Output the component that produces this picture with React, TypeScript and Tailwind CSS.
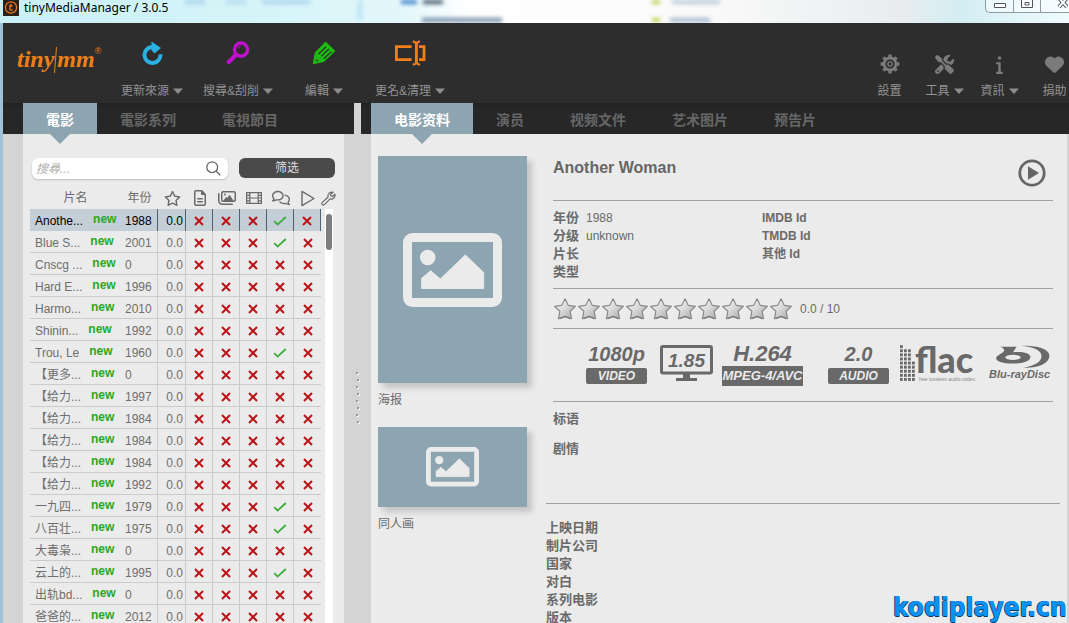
import type { ReactNode } from "react";
import { FaHeart, FaInfo, FaScrewdriverWrench, FaRegComments, FaRegFileLines, FaRegImages, FaRegStar } from "react-icons/fa6";

function RefreshIcon() {
  return (
    <svg width="21" height="24" viewBox="0 0 21 24" aria-hidden="true">
      <path d="M18.4 13.2A8 8 0 1 1 10.2 6" fill="none" stroke="#2bb0e4" strokeWidth="4" />
      <path d="M9.5.6 19 7 12.6 12.4 9.6 9.6Z" fill="#2bb0e4" />
    </svg>
  );
}

function ScrapeIcon() {
  return (
    <svg width="24" height="24" viewBox="0 0 24 24" aria-hidden="true">
      <circle cx="15" cy="8.6" r="6.6" fill="none" stroke="#bf12cc" strokeWidth="3.4" />
      <path d="M12 7.5A3.4 3.4 0 0 1 15 5" fill="none" stroke="#bf12cc" strokeWidth="1.2" />
      <path d="m9.8 14-7 7" stroke="#bf12cc" strokeWidth="4.2" strokeLinecap="round" />
    </svg>
  );
}

function EditIcon() {
  return (
    <svg width="24" height="24" viewBox="0 0 24 24" aria-hidden="true">
      <path d="M13.6 1.4 22.4 10 11.6 20.2 1.6 22.4 3.4 12Z" fill="#1dbb12" stroke="#1dbb12" strokeWidth="1.4" strokeLinejoin="round" />
      <path d="m6.6 13 7.6-7.4M9.2 15.4l7.8-7.4M11.8 17.8l7.6-7.2" stroke="#2d2d2d" strokeWidth="1.2" />
      <path d="m4 18.6 2 1.8" stroke="#2d2d2d" strokeWidth="1.2" />
    </svg>
  );
}

function RenameIcon() {
  return (
    <svg width="32" height="26" viewBox="0 0 32 26" aria-hidden="true" fill="none" stroke="#ef7f1a" strokeWidth="2.8">
      <path d="M17.6 6.6H2.4v13h15.2" />
      <path d="M25 6.6h5v13h-5" />
      <path d="M22.4 3.4v19.2" />
      <path d="M18.8 1.2q3.6.8 3.6 3.4 0-2.6 3.6-3.4M18.8 24.8q3.6-.8 3.6-3.4 0 2.6 3.6 3.4" strokeWidth="2.2" />
    </svg>
  );
}

function GearIcon() {
  return (
    <svg width="20" height="20" viewBox="0 0 20 20" aria-hidden="true" fill="none" stroke="#7b7b7b">
      <circle cx="10" cy="10" r="6" strokeWidth="2.8" />
      <path d="M10 .6v3M10 16.4v3M.6 10h3M16.4 10h3M3.4 3.4l2 2M14.6 14.6l2 2M3.4 16.6l2-2M14.6 5.4l2-2" strokeWidth="3.4" />
      <circle cx="10" cy="10" r="2.1" strokeWidth="1.4" />
    </svg>
  );
}

function Caret() {
  return (
    <svg width="10" height="6" viewBox="0 0 10 6" aria-hidden="true" className="shrink-0">
      <path d="M0 .5h10L5 6Z" fill="#8d8d8d" />
    </svg>
  );
}

function Cross() {
  return (
    <svg width="10" height="10" viewBox="0 0 10 10" role="img" aria-label="no" className="mx-auto block">
      <path d="m1 1 8 8M9 1 1 9" stroke="#bb1418" strokeWidth="2" />
    </svg>
  );
}

function Check() {
  return (
    <svg width="14" height="10" viewBox="0 0 14 10" role="img" aria-label="yes" className="mx-auto block">
      <path d="m1.2 5.2 3.4 3.4L12.8 1" fill="none" stroke="#3aad3a" strokeWidth="1.8" />
    </svg>
  );
}

function FilmIcon() {
  return (
    <svg width="16" height="14" viewBox="0 0 16 14" aria-hidden="true" fill="none" stroke="#6a6a6a" strokeWidth="1.2">
      <path d="M.6 1.6h14.8v10.8H.6zM3.8 1.6v10.8M12.2 1.6v10.8M3.8 7h8.4M.6 4.4h3.2M.6 7h3.2M.6 9.8h3.2M12.2 4.4h3.2M12.2 7h3.2M12.2 9.8h3.2" />
    </svg>
  );
}

function PlayOutline() {
  return (
    <svg width="14" height="17" viewBox="0 0 14 17" aria-hidden="true">
      <path d="M1 1.4v14.2l12-7.1Z" fill="none" stroke="#6a6a6a" strokeWidth="1.4" strokeLinejoin="round" />
    </svg>
  );
}

function WrenchIcon() {
  return (
    <svg width="15" height="15" viewBox="0 0 15 15" aria-hidden="true">
      <path
        d="M12.2 1.3A3.9 3.9 0 0 0 7.1 6L1.3 11.4a1.5 1.5 0 0 0 2.2 2.2L9 7.9a3.9 3.9 0 0 0 4.9-4.7L11.7 5.3l-1.9-.4-.3-1.7Z"
        fill="none"
        stroke="#6a6a6a"
        strokeWidth="1.2"
        strokeLinejoin="round"
      />
    </svg>
  );
}

function PictureIcon({ className }: { className: string }) {
  return (
    <svg viewBox="0 0 99 74" aria-hidden="true" className={className}>
      <rect x="4.5" y="4.5" width="90" height="65" rx="5" fill="none" stroke="#ebebeb" strokeWidth="9" />
      <circle cx="24.7" cy="24.5" r="7.8" fill="#ebebeb" />
      <path d="M18.7 55.4V45.3L27.7 37.7 37.3 46 62.3 22 80.7 39.5V55.4Z" fill="#ebebeb" stroke="#ebebeb" strokeLinejoin="round" />
    </svg>
  );
}

function RatingStar() {
  return (
    <svg width="24" height="24" viewBox="0 0 24 24" aria-hidden="true">
      <path
        d="m12 1.8 3.2 6.5 7.2 1-5.2 5 1.3 7.4-6.5-2.4-6.5 2.4 1.3-7.4-5.2-5 7.2-1Z"
        fill="url(#starFill)"
        stroke="#8b8b8b"
        strokeWidth="1.2"
        strokeLinejoin="round"
      />
      <path d="m6.5 21.7 5.5-2 5.5 2" fill="none" stroke="#777" strokeWidth="1.2" />
    </svg>
  );
}

function ToolButton({ label, icon, menu, side }: { label: string; icon: ReactNode; menu?: boolean; side?: boolean }) {
  return (
    <button type="button" className={side ? "flex w-[55px] flex-col items-center justify-end gap-[9px] pb-1 text-[#7b7b7b]" : "flex w-[86px] flex-col items-center justify-end gap-4 pb-1"}>
      <span className={side ? "flex h-5 items-center" : "flex h-7 items-center"}>{icon}</span>
      <span className="flex h-4 items-center gap-1 whitespace-nowrap text-xs leading-4 text-[#929292]">
        {label}
        {menu && <Caret />}
      </span>
    </button>
  );
}

function Tabs({ items, name }: { items: string[]; name: string }) {
  return (
    <div role="tablist" aria-label={name} className="flex h-[31px]">
      {items.map((item, i) => (
        <button
          key={item}
          type="button"
          role="tab"
          aria-selected={i === 0}
          className={
            i === 0
              ? "relative bg-[#8da4b1] px-[23px] pt-[2px] text-sm font-bold whitespace-nowrap text-white"
              : "px-[23px] pt-[2px] text-sm font-bold whitespace-nowrap text-[#666]"
          }
        >
          {item}
          {i === 0 && (
            <svg width="20" height="10" viewBox="0 0 20 10" aria-hidden="true" className="absolute top-full left-1/2 z-10 -translate-x-1/2">
              <path d="M0 0h20L10 10Z" fill="#8da4b1" />
            </svg>
          )}
        </button>
      ))}
    </div>
  );
}

type Movie = { title: string; year: string; subs?: boolean };

const movies: Movie[] = [
  { title: "Anothe...", year: "1988", subs: true },
  { title: "Blue S...", year: "2001", subs: true },
  { title: "Cnscg ...", year: "0" },
  { title: "Hard E...", year: "1996" },
  { title: "Harmo...", year: "2010" },
  { title: "Shinin...", year: "1992" },
  { title: "Trou, Le", year: "1960", subs: true },
  { title: "【更多...", year: "0" },
  { title: "【给力...", year: "1997" },
  { title: "【给力...", year: "1984" },
  { title: "【给力...", year: "1984" },
  { title: "【给力...", year: "1984" },
  { title: "【给力...", year: "1992" },
  { title: "一九四...", year: "1979", subs: true },
  { title: "八百壮...", year: "1975", subs: true },
  { title: "大毒枭...", year: "0" },
  { title: "云上的...", year: "1995", subs: true },
  { title: "出轨bd...", year: "0" },
  { title: "爸爸的...", year: "2012" },
];

function MovieTable() {
  return (
    <table className="w-[291px] table-fixed border-separate border-spacing-0 text-xs">
      <colgroup>
        <col className="w-[91px]" />
        <col className="w-[37px]" />
        <col className="w-7" />
        <col className="w-[27px]" />
        <col className="w-[27px]" />
        <col className="w-[27px]" />
        <col className="w-[27px]" />
        <col className="w-[27px]" />
      </colgroup>
      <thead>
        <tr className="h-[22px] text-[#6a6a6a] [&>th]:p-0 [&>th]:font-normal [&_svg]:mx-auto [&_svg]:block">
          <th scope="col">片名</th>
          <th scope="col">年份</th>
          <th scope="col" aria-label="rating"><FaRegStar size={17} /></th>
          <th scope="col" aria-label="nfo"><FaRegFileLines size={16} /></th>
          <th scope="col" aria-label="images"><FaRegImages size={18} /></th>
          <th scope="col" aria-label="trailer"><FilmIcon /></th>
          <th scope="col" aria-label="subtitles"><FaRegComments size={18} /></th>
          <th scope="col" aria-label="watched"><PlayOutline /></th>
        </tr>
      </thead>
      <tbody>
        {movies.map((m, i) => (
          <tr
            key={i}
            className={
              i === 0
                ? "h-[22px] bg-[#c3ced6] text-black [&>td]:border-[#4c6375] [&>td]:p-0 [&>td]:pt-px"
                : "h-[22px] text-[#6e6e6e] [&>td]:border-b [&>td]:border-[#c9cbcc] [&>td]:p-0 [&>td]:pt-[2px]"
            }
          >
            <td>
              <div className="flex items-center gap-[10px] pl-[5px] leading-4 whitespace-nowrap">
                {m.title}
                <b className="pb-[3px] text-[#2aa81c]">new</b>
              </div>
            </td>
            <td className="border-r">
              <div className="pl-1 leading-4">{m.year}</div>
            </td>
            <td className="border-r">
              <div className="pr-[2px] text-right leading-4">0.0</div>
            </td>
            <td className="border-r"><Cross /></td>
            <td className="border-r"><Cross /></td>
            <td className="border-r"><Cross /></td>
            <td className="border-r">{m.subs ? <Check /> : <Cross />}</td>
            <td className={i === 0 ? "border-r" : ""}><Cross /></td>
          </tr>
        ))}
      </tbody>
    </table>
  );
}

function MovieList() {
  return (
    <section className="flex min-h-0 flex-1 flex-col bg-[#ebebeb] pt-6 pl-[7px]">
      <div className="flex items-start gap-[11px] pr-[9px] pl-[2px]">
        <label className="flex h-[21px] flex-1 items-center rounded-md bg-white pr-[7px] pl-1 shadow-[0_1px_2px_rgba(0,0,0,0.2)]">
          <input type="search" aria-label="搜尋" placeholder="搜尋..." className="h-full min-w-0 flex-1 bg-transparent text-xs outline-none placeholder:text-[#b0b0b0] placeholder:italic" />
          <svg width="15" height="15" viewBox="0 0 15 15" aria-hidden="true" fill="none" stroke="#666" strokeWidth="1.3">
            <circle cx="6.2" cy="6.2" r="5.4" />
            <path d="m10 10 4.4 4.4" />
          </svg>
        </label>
        <button type="button" className="h-5 w-24 rounded-md bg-[#4a4a4a] text-xs leading-5 text-[#dedede]">筛选</button>
      </div>
      <div className="mt-2 flex min-h-0 flex-1 overflow-hidden">
        <div className="shrink-0">
          <MovieTable />
        </div>
        <div className="flex w-[15px] flex-col">
          <button type="button" aria-label="columns" className="flex h-[22px] items-center justify-center">
            <WrenchIcon />
          </button>
          <div className="mr-[3px] ml-1 flex-1 bg-white px-px pt-[5px]">
            <div className="h-9 rounded-full bg-[#7d7d7d]" />
          </div>
        </div>
      </div>
    </section>
  );
}

function AudioVideoBadge({ value, kind }: { value: string; kind: string }) {
  return (
    <div className="flex w-[61px] flex-col items-center">
      <span className="text-xl leading-[22px] font-bold italic">{value}</span>
      <span className="mt-[3px] h-4 w-full rounded-xs bg-[#696969] text-center text-xs leading-4 font-bold text-[#ebebeb] italic">{kind}</span>
    </div>
  );
}

const flacColumns = [9, 8, 8, 5];

function FlacLogo() {
  return (
    <svg width="78" height="44" viewBox="0 0 78 44" role="img" aria-label="flac">
      {flacColumns.map((count, c) =>
        Array.from({ length: count }, (_, r) => (
          <rect key={`${c}-${r}`} x={c * 4} y={36 - r * 4.1} width="2.8" height="2.9" fill="#696969" />
        )),
      )}
      <text x="15" y="31" fontFamily="Lato, sans-serif" fontWeight="900" fontSize="36" fill="#696969">flac</text>
      <text x="19" y="39" fontFamily="Liberation Sans, sans-serif" fontSize="5" fill="#858585">free lossless audio codec</text>
    </svg>
  );
}

function BluRayLogo() {
  return (
    <svg width="66" height="38" viewBox="0 0 66 38" role="img" aria-label="Blu-ray Disc" fill="#696969">
      <path d="M11.500 1.800H27.600L24 7.200C34 6.200 41.800 8.400 41.400 12.200 41 16.400 33 18.600 23.600 18.600 14.500 18.600 6.600 16.600 7.200 12.800 7.600 10.800 11.500 9.500 14.500 6.800 16 5.200 14.800 3.200 11.500 1.800Z" />
      <ellipse cx="24" cy="12.400" rx="7.600" ry="2.600" fill="#ebebeb" />
      <path d="M32 .8C48 .2 60.800 3.800 60.400 11.200 60 19 47 23.600 34 22.600 45 21 52.500 17 52.500 11.200 52.500 5 44 2 32 .8Z" />
      <text x="0" y="33" fontFamily="Liberation Sans, sans-serif" fontWeight="700" fontStyle="italic" fontSize="11">Blu-rayDisc</text>
    </svg>
  );
}

function MediaLogos() {
  return (
    <div className="flex h-[72px] items-center pb-[3px] pl-[33px] text-[#696969] [&>*]:shrink-0">
      <AudioVideoBadge value="1080p" kind="VIDEO" />
      <svg width="53" height="37" viewBox="0 0 53 37" className="ml-[13px]" role="img" aria-label="1.85">
        <rect x="1.5" y="1.5" width="50" height="26.5" rx="1.5" fill="none" stroke="#696969" strokeWidth="3" />
        <path d="M23 29h7v4h7v3H16v-3h7Z" fill="#696969" />
        <text x="26.5" y="21.5" textAnchor="middle" fontFamily="Liberation Sans, sans-serif" fontWeight="700" fontStyle="italic" fontSize="19" fill="#696969">1.85</text>
      </svg>
      <div className="ml-[9px] flex w-[81px] flex-col items-center">
        <span className="text-[22px] leading-6 font-bold italic">H.264</span>
        <span className="h-5 w-full bg-[#696969] text-center text-[13px] leading-5 font-bold whitespace-nowrap text-[#ebebeb] italic">MPEG-4/AVC</span>
      </div>
      <div className="ml-[25px]">
        <AudioVideoBadge value="2.0" kind="AUDIO" />
      </div>
      <div className="ml-[11px]">
        <FlacLogo />
      </div>
      <div className="ml-[11px]">
        <BluRayLogo />
      </div>
    </div>
  );
}

function Artwork() {
  return (
    <div className="flex w-[149px] shrink-0 flex-col pt-[22px] text-xs text-[#6a6a6a]">
      <figure>
        <div className="flex h-[227px] items-center justify-center bg-[#8da4b1] shadow-[5px_5px_6px_rgba(0,0,0,0.17)]">
          <PictureIcon className="w-[99px]" />
        </div>
        <figcaption className="mt-[9px] h-[35px] leading-4">海报</figcaption>
      </figure>
      <figure>
        <div className="flex h-20 items-center justify-center bg-[#8da4b1] shadow-[5px_5px_6px_rgba(0,0,0,0.17)]">
          <PictureIcon className="w-[53px]" />
        </div>
        <figcaption className="mt-[9px] leading-4">同人画</figcaption>
      </figure>
    </div>
  );
}

const details = ["上映日期", "制片公司", "国家", "对白", "系列电影", "版本"];

function MovieDetails() {
  return (
    <article className="min-w-0 flex-1 text-xs text-[#6a6a6a]">
      <div className="px-[7px]">
        <div className="flex h-[67px] items-start justify-between border-b border-[#a2a2a2] pt-6 pr-[7px]">
          <h1 className="text-base leading-5 font-bold text-[#666]">Another Woman</h1>
          <button type="button" aria-label="play" className="pt-px">
            <svg width="28" height="28" viewBox="0 0 28 28" aria-hidden="true">
              <circle cx="14" cy="14" r="12.2" fill="none" stroke="#666" strokeWidth="2.8" />
              <path d="M10 7.2v13.6L21 14Z" fill="#666" />
            </svg>
          </button>
        </div>
        <div className="grid h-22 grid-cols-[209px_1fr] border-b border-[#a2a2a2] pt-2 leading-[18px]">
          <dl className="grid grid-cols-[33px_1fr] content-start [&>dt]:text-[13px] [&>dt]:font-bold">
            <dt>年份</dt>
            <dd>1988</dd>
            <dt>分级</dt>
            <dd>unknown</dd>
            <dt>片长</dt>
            <dd />
            <dt>类型</dt>
            <dd />
          </dl>
          <dl className="font-bold">
            <dt>IMDB Id</dt>
            <dt>TMDB Id</dt>
            <dt>其他 Id</dt>
          </dl>
        </div>
        <div className="flex h-10 items-center border-b border-[#a2a2a2]">
          <svg width="0" height="0" aria-hidden="true">
            <defs>
              <linearGradient id="starFill" x1="0" y1="0" x2="1" y2="1">
                <stop offset="0.2" stopColor="#f4f4f4" />
                <stop offset="0.9" stopColor="#adadad" />
              </linearGradient>
            </defs>
          </svg>
          {Array.from({ length: 10 }, (_, i) => (
            <RatingStar key={i} />
          ))}
          <span className="pl-[7px]">0.0 / 10</span>
        </div>
        <div className="border-b border-[#a2a2a2]">
          <MediaLogos />
        </div>
        <h2 className="mt-2 h-[30px] text-[13px] leading-[18px] font-bold">标语</h2>
        <h2 className="text-[13px] leading-[18px] font-bold">剧情</h2>
      </div>
      <dl className="mt-[45px] border-t border-[#a2a2a2] pt-[15px] text-[13px] leading-[18px] font-bold">
        {details.map((d) => (
          <dt key={d}>{d}</dt>
        ))}
      </dl>
    </article>
  );
}

function TitleBar() {
  return (
    <header className="relative flex h-[23px] shrink-0 items-start justify-between overflow-hidden bg-[linear-gradient(90deg,#c9f0f6_0%,#d8f5f9_28%,#e4f7fb_38%,#fff_44%,#fafafa_66%,#e9ecee_84%,#d3eef3_90%,#f0fbfd_100%)]">
      <div aria-hidden="true" className="absolute inset-0 blur-[2px]">
        <span className="absolute top-0 left-[185px] h-1 w-5 bg-[#a8d2ea]" />
        <span className="absolute top-0 left-[226px] h-1 w-5 bg-[#b5daee]" />
        <span className="absolute top-0 left-[262px] h-1 w-12 bg-[#a8d2ea]" />
        <span className="absolute top-0 left-[358px] h-5 w-1 bg-[#b4e2ee]" />
        <span className="absolute top-0 left-[401px] h-1 w-4 bg-[#3b7fc4]" />
        <span className="absolute top-0 left-[423px] h-1 w-5 bg-[#43566a]" />
        <span className="absolute top-[18px] left-[422px] h-1 w-20 bg-[#6f88a4]" />
        <span className="absolute top-0 left-[652px] h-1 w-2 bg-[#b9d24c]" />
        <span className="absolute top-0 left-[672px] h-1 w-12 bg-[#b9c9d7]" />
        <span className="absolute top-[18px] left-[652px] h-1 w-2 bg-[#b9d24c]" />
        <span className="absolute top-[18px] left-[670px] h-1 w-10 bg-[#9fb6cb]" />
      </div>
      <div className="relative flex items-center gap-[5px] pl-[3px]">
        <svg width="16" height="16" viewBox="0 0 16 16" aria-hidden="true">
          <path d="M0 0h16v16H0z" fill="#2b2119" />
          <circle cx="8" cy="7.5" r="5.6" fill="none" stroke="#df7420" strokeWidth="1.3" />
          <path d="M8 3.8 6.8 9.2q0 1.6 3 .6M6 6h3.6" fill="none" stroke="#df7420" strokeWidth="1.4" />
        </svg>
        <span className="font-['Noto_Sans','Open_Sans',sans-serif] text-xs leading-4 text-black">tinyMediaManager / 3.0.5</span>
      </div>
      <div className="relative flex h-[13px] overflow-hidden rounded-bl-[5px] border-b border-l border-[#8e9ba0] bg-white/50">
        <button type="button" aria-label="minimize" className="flex w-7 items-center justify-center border-r border-[#8e9ba0]">
          <svg width="12" height="12" viewBox="0 0 12 12"><path d="M.5 3.5h11v4H.5z" fill="#fff" stroke="#4d565e" /></svg>
        </button>
        <button type="button" aria-label="restore" className="flex w-[27px] items-center justify-center border-r border-[#8e9ba0]">
          <svg width="12" height="12" viewBox="0 0 12 12"><path d="M.5-1.5h11v9H.5zM4 2.5h4V5H4z" fill="#fff" stroke="#4d565e" /></svg>
        </button>
        <button type="button" aria-label="close" className="flex w-7 items-center justify-end">
          <svg width="12" height="12" viewBox="0 0 12 12"><path d="m2-2 8 9M10-2 2 7" stroke="#4d565e" strokeWidth="4" /><path d="m2-2 8 9M10-2 2 7" stroke="#fff" strokeWidth="2" /></svg>
        </button>
      </div>
    </header>
  );
}

export default function App() {
  return (
    <div className="relative flex h-screen flex-col overflow-hidden bg-[#d4d4d4] font-['Liberation_Sans','Noto_Sans_CJK_SC',sans-serif]">
      <TitleBar />
      <div className="flex min-h-0 flex-1 flex-col border-l-3 border-[#9fc3d6]">
        <div className="flex h-20 shrink-0 overflow-hidden bg-[#2d2d2d] font-['Liberation_Sans','Noto_Sans_CJK_TC',sans-serif]">
          <div className="flex w-[106px] items-start pt-[20px] pl-[14px] text-[#ee7f17]">
            <span className="font-['Liberation_Serif',serif] text-2xl leading-8 font-bold italic">tiny</span>
            <svg width="3" height="26" viewBox="0 0 3 26" aria-hidden="true" className="mt-1 shrink-0">
              <path d="M2.5 0 .5 26" stroke="#ee7f17" />
            </svg>
            <span className="font-['Liberation_Serif',serif] text-2xl leading-8 font-bold italic">mm</span>
            <span className="text-[9px] leading-4">®</span>
          </div>
          <nav className="flex flex-1" aria-label="actions">
            <ToolButton label="更新來源" icon={<RefreshIcon />} menu />
            <ToolButton label="搜尋&刮削" icon={<ScrapeIcon />} menu />
            <ToolButton label="編輯" icon={<EditIcon />} menu />
            <ToolButton label="更名&清理" icon={<RenameIcon />} menu />
          </nav>
          <nav className="-mr-[13px] flex" aria-label="application">
            <ToolButton label="設置" icon={<GearIcon />} side />
            <ToolButton label="工具" icon={<FaScrewdriverWrench size={19} />} menu side />
            <ToolButton label="資訊" icon={<FaInfo size={19} />} menu side />
            <ToolButton label="捐助" icon={<FaHeart size={19} />} side />
          </nav>
        </div>
        <div className="flex min-h-0 flex-1">
          <div className="flex w-[351px] shrink-0 flex-col">
            <div className="bg-[linear-gradient(#222,#272727_6px)] pl-5">
              <Tabs name="library" items={["電影", "電影系列", "電視節目"]} />
            </div>
            <div className="flex min-h-0 flex-1 pr-[10px] pl-5">
              <MovieList />
            </div>
          </div>
          <div className="flex w-[7px] shrink-0 items-center justify-center" role="separator" aria-orientation="vertical">
            <svg width="4" height="54" viewBox="0 0 4 54" aria-hidden="true" className="mt-[72px]">
              {Array.from({ length: 8 }, (_, i) => (
                <g key={i}>
                  <path d={`M${i % 2 ? 2 : 1} ${i * 7 + 1}h2v2h-2z`} fill="#f6f6f6" />
                  <path d={`M${i % 2 ? 1 : 0} ${i * 7}h2v2h-2z`} fill="#9a9a9a" />
                </g>
              ))}
            </svg>
          </div>
          <div className="flex min-w-0 flex-1 flex-col">
            <div className="bg-[linear-gradient(#222,#272727_6px)] pl-[10px]">
              <Tabs name="details" items={["电影资料", "演员", "视频文件", "艺术图片", "预告片"]} />
            </div>
            <div className="flex min-h-0 flex-1 pr-[2px] pl-[10px]">
              <div className="flex min-w-0 flex-1 gap-[19px] overflow-hidden bg-[#ebebeb] pr-[7px] pl-[7px]">
                <Artwork />
                <MovieDetails />
              </div>
            </div>
          </div>
        </div>
      </div>
      <a
        href="#kodiplayer"
        className="absolute right-[2px] bottom-0 font-['DejaVu_Sans_Condensed','DejaVu_Sans',sans-serif] text-[26px] leading-8 font-bold text-[#0a93f5] [text-shadow:-1px_0_#063a66,0_1px_#063a66]"
      >
        kodiplayer.cn
      </a>
    </div>
  );
}
